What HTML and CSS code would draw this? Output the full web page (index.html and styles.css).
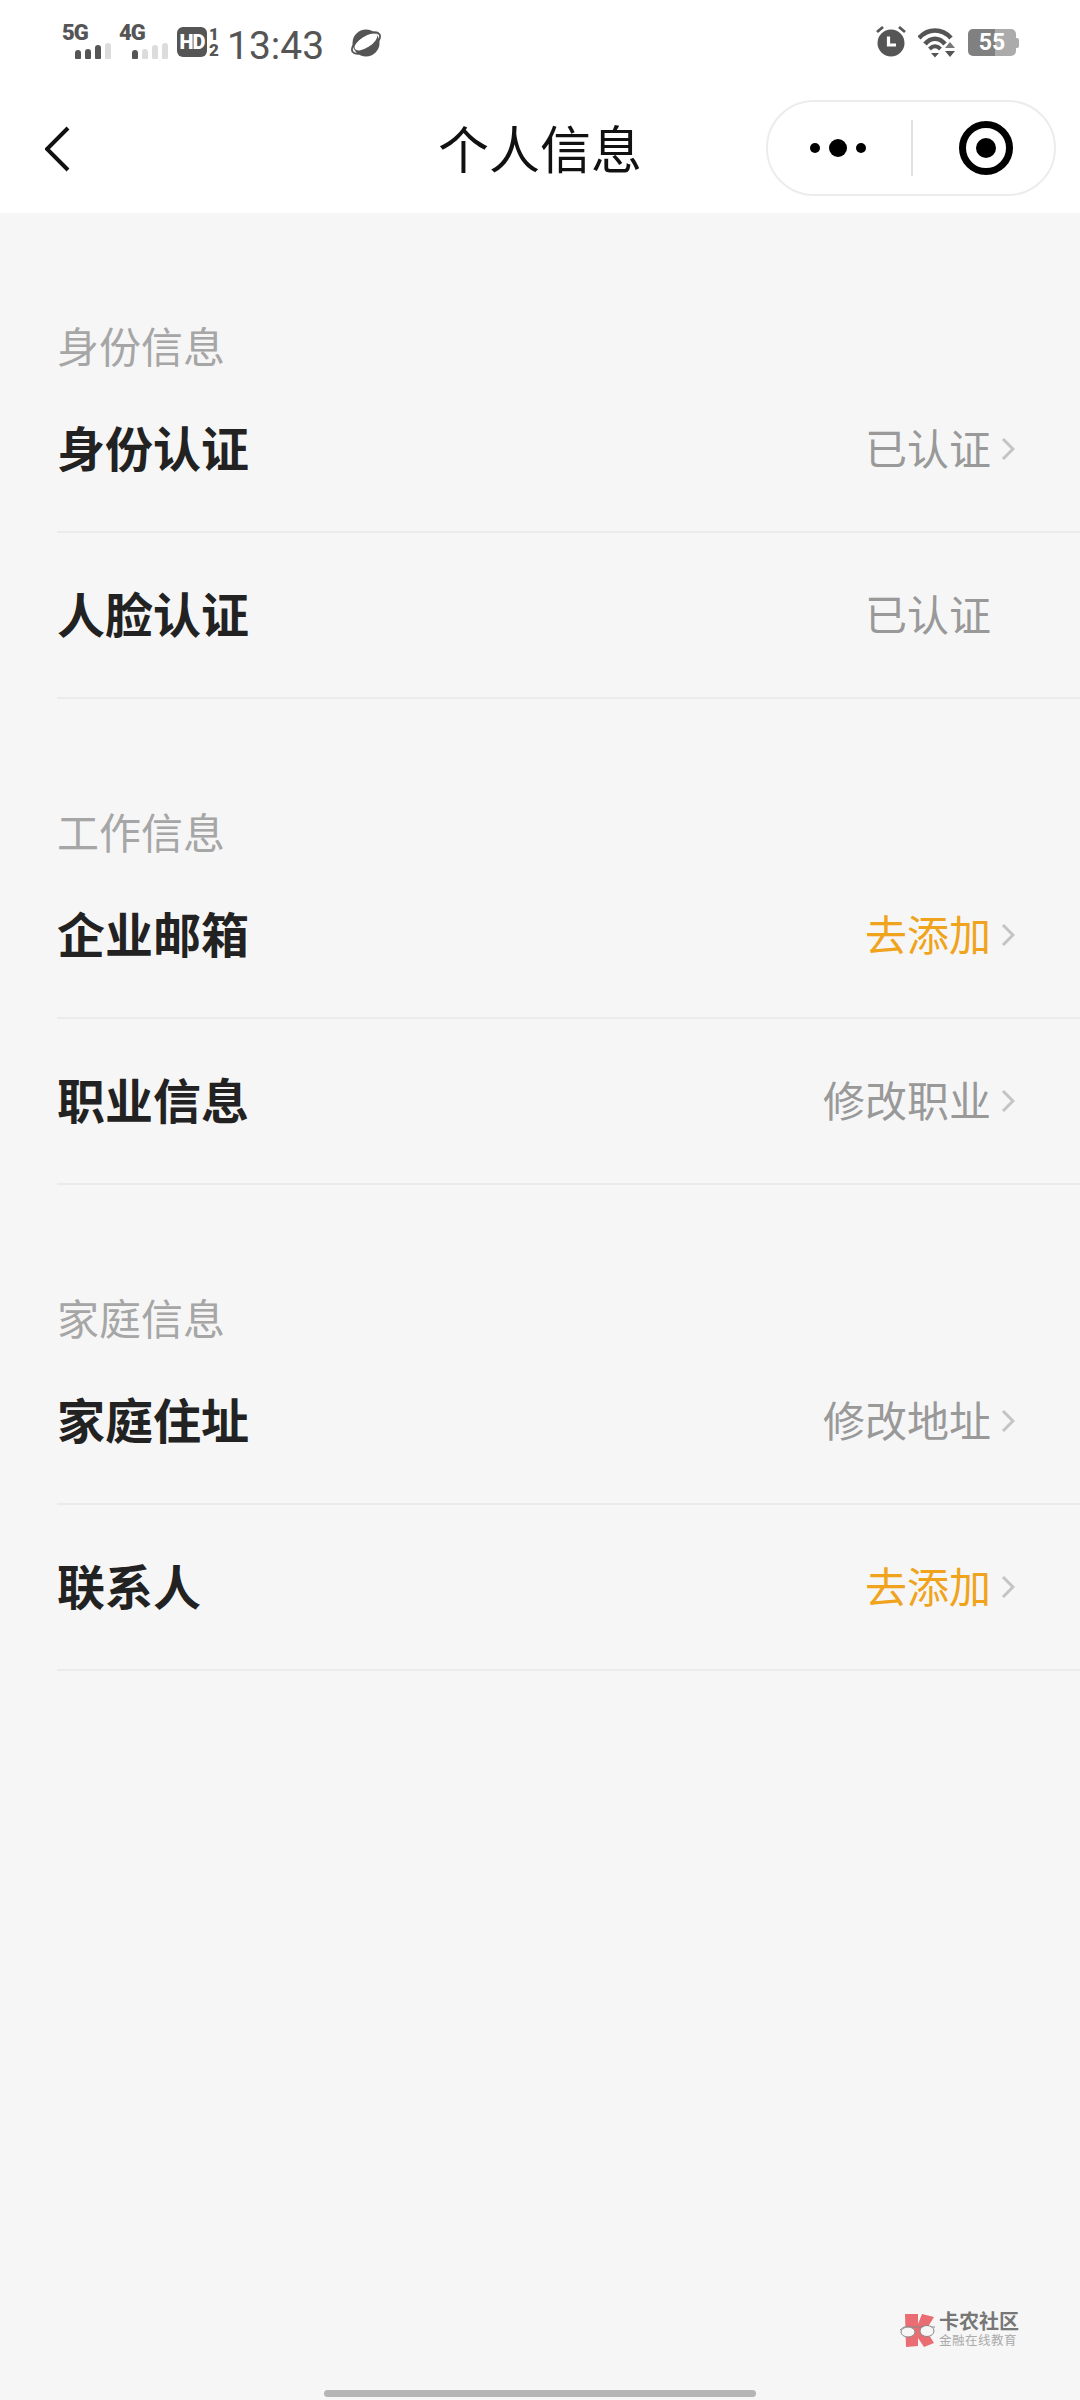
FILE: index.html
```html
<!DOCTYPE html>
<html lang="zh">
<head>
    <meta charset="UTF-8">
    <meta name="viewport" content="width=device-width, initial-scale=1.0">
    <title>个人信息</title>
    <link rel="stylesheet" href="styles.css">
</head>
<body>
    <div class="page">
        <div class="status-bar">
            <div class="status-left">
                <div class="net">
                    <span class="net-label">5G</span>
                    <div class="bars">
                        <i class="bar b1"></i><i class="bar b2"></i><i class="bar b3"></i><i class="bar b4 off"></i>
                    </div>
                </div>
                <div class="net net-second">
                    <span class="net-label">4G</span>
                    <div class="bars">
                        <i class="bar b1"></i><i class="bar b2 off"></i><i class="bar b3 off"></i><i class="bar b4 off"></i>
                    </div>
                </div>
                <div class="hd">HD</div>
                <div class="sim"><span>1</span><span>2</span></div>
                <div class="time">13:43</div>
                <svg class="planet" width="32" height="32" viewBox="0 0 32 32">
                    <circle cx="16" cy="16" r="13.5" fill="#555"/>
                    <ellipse cx="16.5" cy="15" rx="13" ry="5.6" transform="rotate(-33 16 16)" fill="#fff"/>
                    <ellipse cx="16" cy="16" rx="16" ry="7.5" transform="rotate(-33 16 16)" fill="none" stroke="#555" stroke-width="1.8"/>
                </svg>
            </div>
            <div class="status-right">
                <svg class="alarm" width="32" height="32" viewBox="0 0 32 32">
                    <circle cx="16" cy="18" r="13.5" fill="#555"/>
                    <path d="M2 7 L8 2 M30 7 L24 2" stroke="#555" stroke-width="2.8" fill="none"/>
                    <path d="M13.5 11.5 V20 H21" stroke="#fff" stroke-width="3.2" fill="none"/>
                </svg>
                <svg class="wifi" width="38" height="30" viewBox="0 0 38 30">
                    <path d="M1 10 C10 0 24 0 33 10" stroke="#555" stroke-width="4.6" fill="none"/>
                    <path d="M7 16 C13 9 21 9 27 16" stroke="#555" stroke-width="4.6" fill="none"/>
                    <path d="M11.5 21 C15 17.5 19 17.5 22.5 21" stroke="#555" stroke-width="4" fill="none"/>
                    <path d="M13 25 H21 L17 29.5 Z" fill="#555"/>
                    <path d="M32 14 L37 20 H27 Z" fill="#777"/>
                    <path d="M27 23 H37 L32 29 Z" fill="#555"/>
                </svg>
                <div class="battery">
                    <div class="battery-body"><span>55</span></div>
                    <i class="battery-cap"></i>
                </div>
            </div>
        </div>

        <div class="nav-bar">
            <svg class="back" width="26" height="48" viewBox="0 0 26 48">
                <path d="M23 3 L2 24 L23 45" stroke="#111" stroke-width="4" fill="none"/>
            </svg>
            <h1 class="nav-title">个人信息</h1>
            <div class="capsule">
                <div class="capsule-more">
                    <i class="dot"></i><i class="dot dot-big"></i><i class="dot"></i>
                </div>
                <i class="capsule-line"></i>
                <div class="capsule-close">
                    <svg width="54" height="54" viewBox="0 0 54 54">
                        <circle cx="27" cy="27" r="23.5" fill="none" stroke="#000" stroke-width="7"/>
                        <circle cx="27" cy="27" r="10" fill="#000"/>
                    </svg>
                </div>
            </div>
        </div>

        <div class="section">
            <div class="section-title">身份信息</div>
            <div class="row">
                <span class="row-name">身份认证</span>
                <span class="row-value">已认证</span>
                <span class="chev"><svg width="14" height="24" viewBox="0 0 14 24"><path d="M2 2 L12 12 L2 22" stroke="#c4c4c4" stroke-width="3" fill="none"/></svg></span>
            </div>
            <div class="row">
                <span class="row-name">人脸认证</span>
                <span class="row-value">已认证</span>
                <span class="chev"></span>
            </div>
        </div>

        <div class="section">
            <div class="section-title">工作信息</div>
            <div class="row">
                <span class="row-name">企业邮箱</span>
                <span class="row-value todo">去添加</span>
                <span class="chev"><svg width="14" height="24" viewBox="0 0 14 24"><path d="M2 2 L12 12 L2 22" stroke="#c4c4c4" stroke-width="3" fill="none"/></svg></span>
            </div>
            <div class="row">
                <span class="row-name">职业信息</span>
                <span class="row-value">修改职业</span>
                <span class="chev"><svg width="14" height="24" viewBox="0 0 14 24"><path d="M2 2 L12 12 L2 22" stroke="#c4c4c4" stroke-width="3" fill="none"/></svg></span>
            </div>
        </div>

        <div class="section">
            <div class="section-title">家庭信息</div>
            <div class="row">
                <span class="row-name">家庭住址</span>
                <span class="row-value">修改地址</span>
                <span class="chev"><svg width="14" height="24" viewBox="0 0 14 24"><path d="M2 2 L12 12 L2 22" stroke="#c4c4c4" stroke-width="3" fill="none"/></svg></span>
            </div>
            <div class="row">
                <span class="row-name">联系人</span>
                <span class="row-value todo">去添加</span>
                <span class="chev"><svg width="14" height="24" viewBox="0 0 14 24"><path d="M2 2 L12 12 L2 22" stroke="#c4c4c4" stroke-width="3" fill="none"/></svg></span>
            </div>
        </div>

        <div class="watermark">
            <svg width="36" height="40" viewBox="0 0 36 40">
                <path d="M5 4 H18 V14 L22 4 L34 7 L26 20 L34 33 L24 37 L18 28 V36 L6 37 Z" fill="#ea6d73"/>
                <path d="M0 20 L4 17 H30 L35 17" stroke="#888" stroke-width="1" fill="none"/>
                <ellipse cx="8" cy="22" rx="7" ry="5" fill="#f6f6f6" stroke="#888" stroke-width="1"/>
                <ellipse cx="27" cy="21" rx="7" ry="5.5" fill="#f6f6f6" stroke="#888" stroke-width="1"/>
            </svg>
            <div class="watermark-text">
                <div class="watermark-name">卡农社区</div>
                <div class="watermark-sub">金融在线教育</div>
            </div>
        </div>
        <div class="home-bar"></div>
    </div>
</body>
</html>
```

FILE: styles.css
```css
* {
    box-sizing: border-box;
}
body {
    margin: 0;
    background-color: #f6f6f6;
    font-family: "Noto Sans CJK SC", "Noto Sans", sans-serif;
}
.page {
    position: relative;
    width: 1080px;
    height: 2400px;
    overflow: hidden;
}
.status-bar {
    height: 90px;
    background-color: #fff;
    display: flex;
    justify-content: space-between;
    align-items: flex-start;
    padding: 24px 61px 0 62px;
    color: #555;
    font-family: Roboto, "Liberation Sans", sans-serif;
}
.status-left, .status-right {
    display: flex;
    align-items: flex-start;
}
.net {
    width: 50px;
    height: 34px;
    position: relative;
}
.net-second {
    margin-left: 7px;
}
.net-label {
    display: block;
    font-size: 22px;
    font-weight: 900;
    line-height: 18px;
    letter-spacing: -1px;
}
.bars {
    position: absolute;
    left: 13px;
    bottom: -1px;
    display: flex;
    align-items: flex-end;
    gap: 4px;
}
.bar {
    display: block;
    width: 6px;
    border-radius: 3px 3px 1px 1px;
    background-color: #555;
}
.bar.off {
    background-color: #dcdcdc;
}
.b1 { height: 9px; }
.b2 { height: 10px; }
.b3 { height: 14px; }
.b4 { height: 16px; }
.hd {
    width: 30px;
    height: 30px;
    margin-left: 8px;
    margin-top: 3px;
    border-radius: 6px;
    background-color: #555;
    color: #fff;
    font-size: 20px;
    font-weight: 900;
    line-height: 30px;
    text-align: center;
    letter-spacing: -1px;
}
.sim {
    width: 12px;
    margin-left: 1px;
    margin-top: 2px;
    display: flex;
    flex-direction: column;
    font-size: 17px;
    font-weight: 900;
    line-height: 16px;
    text-align: center;
}
.time {
    margin-left: 7px;
    margin-top: -1px;
    font-size: 39px;
    line-height: 46px;
    font-weight: 400;
}
.planet {
    margin-left: 26px;
    margin-top: 3px;
}
.alarm {
    margin-top: 1px;
}
.wifi {
    margin-left: 11px;
    margin-top: 4px;
}
.battery {
    display: flex;
    align-items: center;
    margin-left: 12px;
    margin-top: 5px;
}
.battery-body {
    width: 48px;
    height: 27px;
    border-radius: 5px;
    background: linear-gradient(90deg, #808080 0, #808080 27px, #ababab 27px);
    color: #fff;
    font-size: 23px;
    font-weight: 700;
    line-height: 27px;
    text-align: center;
}
.battery-cap {
    display: block;
    width: 3px;
    height: 10px;
    border-radius: 0 2px 2px 0;
    background-color: #ababab;
}
.nav-bar {
    height: 123px;
    background-color: #fff;
    position: relative;
    display: flex;
    align-items: center;
    padding: 0 0 5px 45px;
}
.nav-title {
    position: absolute;
    left: 0;
    right: 0;
    top: 19px;
    margin: 0;
    text-align: center;
    font-size: 51px;
    font-weight: 400;
    line-height: 76px;
    color: #111;
}
.capsule {
    position: absolute;
    left: 766px;
    top: 10px;
    width: 290px;
    height: 96px;
    border: 2px solid #ececec;
    border-radius: 48px;
    display: flex;
    align-items: center;
}
.capsule-more {
    flex: 0 0 143px;
    display: flex;
    align-items: center;
    justify-content: center;
    gap: 9px;
    padding-right: 3px;
}
.dot {
    display: block;
    width: 10px;
    height: 10px;
    border-radius: 50%;
    background-color: #000;
}
.dot-big {
    width: 18px;
    height: 18px;
}
.capsule-line {
    display: block;
    width: 2px;
    height: 56px;
    background-color: #e2e2e2;
}
.capsule-close {
    flex: 1;
    display: flex;
    align-items: center;
    justify-content: center;
    padding-left: 4px;
}
.capsule-close svg {
    display: block;
}
.section {
    padding: 114px 0 0 57px;
}
.section-title {
    height: 40px;
    font-size: 42px;
    line-height: 36px;
    color: #a6a6a6;
}
.row {
    height: 166px;
    display: flex;
    align-items: center;
    padding-right: 65px;
    border-bottom: 2px solid #ebebeb;
}
.row-name {
    flex: 1;
    padding-bottom: 7px;
    font-size: 48px;
    font-weight: 700;
    color: #222;
}
.row-value {
    padding-bottom: 6px;
    font-size: 42px;
    color: #999;
}
.row-value.todo {
    color: #f0a31c;
}
.chev {
    width: 14px;
    height: 24px;
    margin-left: 10px;
    display: block;
}
.chev svg {
    display: block;
}
.watermark {
    position: absolute;
    left: 900px;
    top: 2310px;
    display: flex;
    align-items: center;
    gap: 3px;
}
.watermark-text {
    font-family: "Liberation Sans", "Noto Sans CJK SC", sans-serif;
}
.watermark-name {
    font-size: 20px;
    font-weight: 700;
    line-height: 23px;
    color: #777;
}
.watermark-sub {
    font-size: 12.5px;
    line-height: 15px;
    letter-spacing: 0.5px;
    color: #aaa;
}
.home-bar {
    position: absolute;
    left: 324px;
    top: 2390px;
    width: 432px;
    height: 7px;
    border-radius: 4px;
    background-color: #b5b5b5;
}
```
